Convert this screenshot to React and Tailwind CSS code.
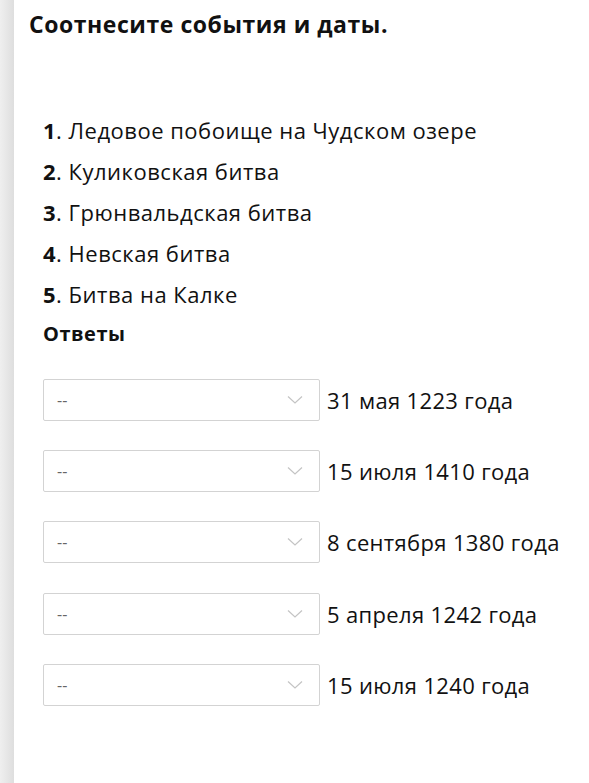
export default function App() {
  const items = [
    ["1", "Ледовое побоище на Чудском озере"],
    ["2", "Куликовская битва"],
    ["3", "Грюнвальдская битва"],
    ["4", "Невская битва"],
    ["5", "Битва на Калке"],
  ];
  const dates = [
    "31 мая 1223 года",
    "15 июля 1410 года",
    "8 сентября 1380 года",
    "5 апреля 1242 года",
    "15 июля 1240 года",
  ];
  return (
    <div className="flex h-[783px] w-[589px] bg-white text-[#111] overflow-hidden" style={{ fontFamily: '"Open Sans", sans-serif' }}>
      <div className="w-[14px] shrink-0 bg-gradient-to-r from-[#efefef] to-[#dedede]" />
      <div className="flex-1 pl-[15px]">
        <h1 className="pt-[8px] text-[23px] leading-[32px] tracking-[0.55px] font-bold text-[#111]">Соотнесите события и даты.</h1>
        <ul className="mt-[70px] pl-[14px]">
          {items.map(([n, t]) => (
            <li key={n} className="text-[22px] leading-[41px] tracking-[0.5px]">
              <span className="font-bold">{n}</span>. {t}
            </li>
          ))}
        </ul>
        <div className="pl-[14px] text-[20px] leading-[38px] tracking-[0.5px] font-bold">Ответы</div>
        <div className="mt-[26px] pl-[14px] flex flex-col gap-[29.2px]">
          {dates.map((d) => (
            <div key={d} className="flex items-center gap-[7px]">
              <div className="flex h-[42px] w-[277px] items-center justify-between rounded-[2px] border border-[#d3d3d3] bg-white pl-[13px] pr-[16px]">
                <span className="text-[16px] text-[#666]">--</span>
                <svg width="16" height="10" viewBox="0 0 16 10" fill="none">
                  <path d="M1 1.5 L8 8 L15 1.5" stroke="#c4c4c4" strokeWidth="1.2" />
                </svg>
              </div>
              <span className="text-[22px] leading-[30px] tracking-[0.35px] text-[#111]">{d}</span>
            </div>
          ))}
        </div>
      </div>
    </div>
  );
}
